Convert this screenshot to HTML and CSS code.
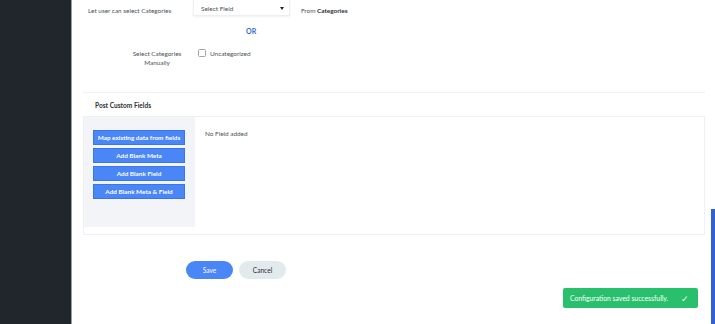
FILE: index.html
```html
<!DOCTYPE html>
<html>
<head>
<meta charset="utf-8">
<link rel="stylesheet" href="styles.css">
</head>
<body>
<div class="app">
  <aside class="sidebar"></aside>
  <main class="main">
    <div class="row row-select">
      <div class="label-left">Let user can select Categories</div>
      <div class="select">
        <span>Select Field</span>
        <span class="caret"></span>
      </div>
      <div class="from">From <b>Categories</b></div>
    </div>
    <div class="or">OR</div>
    <div class="row row-manual">
      <div class="label-center">Select Categories<br>Manually</div>
      <label class="check"><span class="box"></span>Uncategorized</label>
    </div>
    <div class="section">
      <div class="section-title">Post Custom Fields</div>
      <div class="fields">
        <div class="fields-side">
          <button class="btn">Map existing data from fields</button>
          <button class="btn">Add Blank Meta</button>
          <button class="btn">Add Blank Field</button>
          <button class="btn">Add Blank Meta &amp; Field</button>
        </div>
        <div class="fields-body">No Field added</div>
      </div>
    </div>
    <div class="actions">
      <button class="pill save">Save</button>
      <button class="pill cancel">Cancel</button>
    </div>
  </main>
</div>
<div class="toast">Configuration saved successfully. <span class="tick">✓</span></div>
<div class="scrollbar"></div>
</body>
</html>
```
FILE: styles.css
```css
* { box-sizing: border-box; }
html, body { margin: 0; padding: 0; }
body {
  width: 715px;
  height: 324px;
  overflow: hidden;
  font-family: Lato, "Noto Sans", sans-serif;
  font-size: 6.4px;
  color: #4c5157;
  background: #fff;
  position: relative;
}
.app { display: flex; height: 324px; }
.sidebar {
  width: 72px;
  flex: none;
  background: #21262d;
  border-right: 1px solid #9a9da1;
}
.main {
  flex: 1;
  padding: 0 10px 0 11px;
  display: flex;
  flex-direction: column;
}
.row { display: flex; align-items: center; }
.row-select { height: 17px; padding-top: 3px; }
.label-left { flex: none; width: 110px; padding-left: 5px; white-space: nowrap; }
.select {
  flex: none;
  width: 97px;
  height: 16px;
  margin-top: -4px;
  border: 1px solid #eceef0;
  border-top: none;
  background: #fff;
  box-shadow: 0 1px 2px rgba(0,0,0,0.06);
  display: flex;
  align-items: center;
  justify-content: space-between;
  padding: 1px 5px 0 7px;
  color: #4c5157;
}
.caret {
  width: 0; height: 0;
  border-left: 2.5px solid transparent;
  border-right: 2.5px solid transparent;
  border-top: 3px solid #222;
}
.from { margin-left: 11px; white-space: nowrap; }
.from b { font-weight: 700; color: #2c3035; }
.or {
  margin: 10px 0 0 163px;
  height: 12px;
  font-weight: 700;
  font-size: 7px;
  color: #2f6bd5;
}
.row-manual { margin-top: 10px; align-items: flex-start; }
.label-center {
  flex: none;
  width: 64px;
  margin-left: 42px;
  text-align: center;
  line-height: 9px;
}
.check {
  margin-left: 9px;
  display: flex;
  align-items: center;
}
.box {
  width: 8px; height: 8px;
  border: 1px solid #9ea3a8;
  border-radius: 1.5px;
  margin-right: 4px;
  background: #fff;
}
.section {
  margin-top: 25px;
  border-top: 1px solid #f0f1f3;
}
.section-title {
  height: 23px;
  line-height: 24px;
  padding-left: 12px;
  font-weight: 700;
  color: #2c3035;
  font-size: 6.6px;
}
.fields {
  height: 119px;
  border: 1px solid #eef0f2;
  display: flex;
  align-items: flex-start;
}
.fields-side {
  flex: none;
  width: 111px;
  height: 110px;
  background: #f2f4f7;
  padding: 13px 9px 0 9px;
  display: flex;
  flex-direction: column;
  gap: 3px;
}
.btn {
  height: 15px;
  width: 92px;
  border: 1px solid #3a76e6;
  background: #4a86f6;
  color: #fff;
  font-family: inherit;
  font-size: 6.4px;
  font-weight: 700;
  padding: 0;
  white-space: nowrap;
}
.fields-body {
  padding: 13px 0 0 10px;
}
.actions {
  margin-top: 26px;
  padding-left: 103px;
  display: flex;
  gap: 6px;
}
.pill {
  width: 47px;
  height: 18px;
  border-radius: 9px;
  border: none;
  font-family: inherit;
  font-size: 6.6px;
  padding: 0;
}
.save { background: #4a86f6; color: #fff; }
.cancel { background: #e3eaee; color: #2c3035; }
.toast {
  position: absolute;
  left: 563px;
  top: 288px;
  width: 135px;
  height: 20px;
  background: #28c06c;
  border-radius: 2px;
  color: #fff;
  display: flex;
  align-items: center;
  padding-left: 7px;
  font-size: 6.8px;
  white-space: pre;
}
.tick { margin-left: 11px; font-size: 9px; }
.scrollbar {
  position: absolute;
  left: 711px;
  top: 209px;
  width: 4px;
  height: 115px;
  background: #2f62d3;
}
```
